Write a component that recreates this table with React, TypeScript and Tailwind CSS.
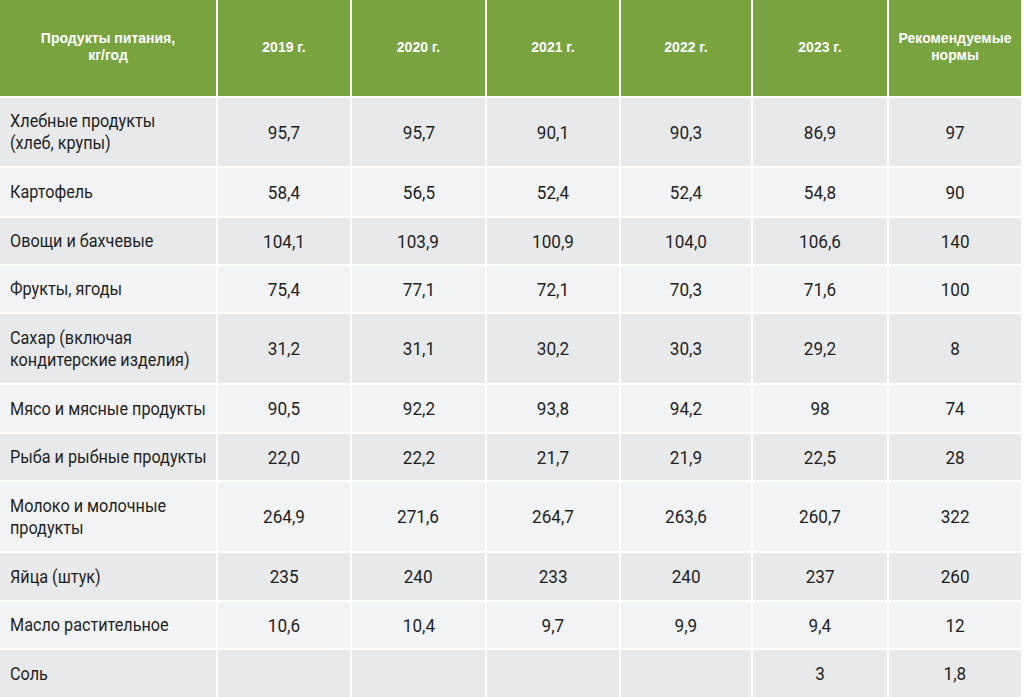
import React from "react";

const headers = ["Продукты питания,\nкг/год", "2019 г.", "2020 г.", "2021 г.", "2022 г.", "2023 г.", "Рекомендуемые\nнормы"];

const rows: { name: string; vals: string[]; h: string }[] = [
  { name: "Хлебные продукты\n(хлеб, крупы)", vals: ["95,7", "95,7", "90,1", "90,3", "86,9", "97"], h: "h-[68px]" },
  { name: "Картофель", vals: ["58,4", "56,5", "52,4", "52,4", "54,8", "90"], h: "h-[48px]" },
  { name: "Овощи и бахчевые", vals: ["104,1", "103,9", "100,9", "104,0", "106,6", "140"], h: "h-[46px]" },
  { name: "Фрукты, ягоды", vals: ["75,4", "77,1", "72,1", "70,3", "71,6", "100"], h: "h-[46px]" },
  { name: "Сахар (включая\nкондитерские изделия)", vals: ["31,2", "31,1", "30,2", "30,3", "29,2", "8"], h: "h-[69px]" },
  { name: "Мясо и мясные продукты", vals: ["90,5", "92,2", "93,8", "94,2", "98", "74"], h: "h-[47px]" },
  { name: "Рыба и рыбные продукты", vals: ["22,0", "22,2", "21,7", "21,9", "22,5", "28"], h: "h-[46px]" },
  { name: "Молоко и молочные\nпродукты", vals: ["264,9", "271,6", "264,7", "263,6", "260,7", "322"], h: "h-[69px]" },
  { name: "Яйца (штук)", vals: ["235", "240", "233", "240", "237", "260"], h: "h-[47px]" },
  { name: "Масло растительное", vals: ["10,6", "10,4", "9,7", "9,9", "9,4", "12"], h: "h-[46px]" },
  { name: "Соль", vals: ["", "", "", "", "3", "1,8"], h: "h-[47px]" },
];

export default function App() {
  return (
    <div className="w-[1024px] h-[697px] overflow-hidden bg-white">
      <div
        className="grid w-[1021px] grid-cols-[216px_132px_133px_132px_130px_134px_132px] gap-[2px] bg-white"
        style={{ fontFamily: '"Roboto", "Liberation Sans", sans-serif' }}
      >
        {headers.map((t, i) => (
          <div
            key={i}
            className="h-[96px] bg-[#79a33f] flex items-center justify-center text-center whitespace-pre-line text-white font-bold text-[14px] leading-[17px] pb-[2px]"
            style={{ fontFamily: '"Liberation Sans", "Roboto", sans-serif' }}
          >
            {t}
          </div>
        ))}
        {rows.map((r, ri) => {
          const bg = ri % 2 === 0 ? "bg-[#e8e9eb]" : "bg-[#f2f3f5]";
          return (
            <React.Fragment key={ri}>
              <div className={`${r.h} ${bg} flex items-center pl-[10px] text-[18px] leading-[22px] text-[#1f1f1f]`}>
                <span className="inline-block whitespace-pre scale-x-[0.9] origin-left">{r.name}</span>
              </div>
              {r.vals.map((v, vi) => (
                <div key={vi} className={`${r.h} ${bg} flex items-center justify-center text-[18px] text-[#1f1f1f]`}>
                  <span className="inline-block scale-x-[0.95]">{v}</span>
                </div>
              ))}
            </React.Fragment>
          );
        })}
      </div>
    </div>
  );
}
